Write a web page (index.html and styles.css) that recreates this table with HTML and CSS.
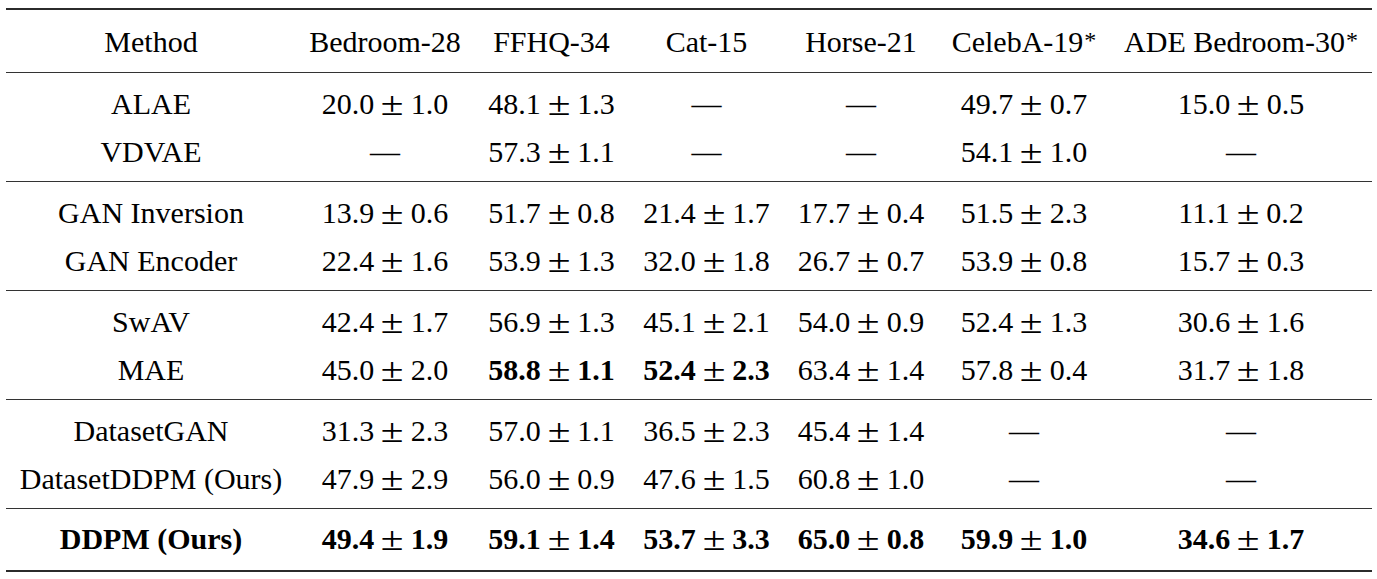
FILE: index.html
```html
<!DOCTYPE html>
<html>
<head>
<meta charset="utf-8">
<link rel="stylesheet" href="styles.css">
</head>
<body>
<table class="results">
  <colgroup>
    <col class="c-method"><col class="c-bed"><col class="c-ffhq"><col class="c-cat"><col class="c-horse"><col class="c-celeb"><col class="c-ade">
  </colgroup>
  <thead>
    <tr>
      <th>Method</th><th>Bedroom-28</th><th>FFHQ-34</th><th>Cat-15</th><th>Horse-21</th><th>CelebA-19<span class="ast">*</span></th><th>ADE Bedroom-30<span class="ast">*</span></th>
    </tr>
  </thead>
  <tbody class="grp">
    <tr><td>ALAE</td><td>20.0<span class="pm">±</span>1.0</td><td>48.1<span class="pm">±</span>1.3</td><td>—</td><td>—</td><td>49.7<span class="pm">±</span>0.7</td><td>15.0<span class="pm">±</span>0.5</td></tr>
    <tr><td>VDVAE</td><td>—</td><td>57.3<span class="pm">±</span>1.1</td><td>—</td><td>—</td><td>54.1<span class="pm">±</span>1.0</td><td>—</td></tr>
  </tbody>
  <tbody class="grp">
    <tr><td>GAN Inversion</td><td>13.9<span class="pm">±</span>0.6</td><td>51.7<span class="pm">±</span>0.8</td><td>21.4<span class="pm">±</span>1.7</td><td>17.7<span class="pm">±</span>0.4</td><td>51.5<span class="pm">±</span>2.3</td><td>11.1<span class="pm">±</span>0.2</td></tr>
    <tr><td>GAN Encoder</td><td>22.4<span class="pm">±</span>1.6</td><td>53.9<span class="pm">±</span>1.3</td><td>32.0<span class="pm">±</span>1.8</td><td>26.7<span class="pm">±</span>0.7</td><td>53.9<span class="pm">±</span>0.8</td><td>15.7<span class="pm">±</span>0.3</td></tr>
  </tbody>
  <tbody class="grp">
    <tr><td>SwAV</td><td>42.4<span class="pm">±</span>1.7</td><td>56.9<span class="pm">±</span>1.3</td><td>45.1<span class="pm">±</span>2.1</td><td>54.0<span class="pm">±</span>0.9</td><td>52.4<span class="pm">±</span>1.3</td><td>30.6<span class="pm">±</span>1.6</td></tr>
    <tr><td>MAE</td><td>45.0<span class="pm">±</span>2.0</td><td><b>58.8</b><span class="pm">±</span><b>1.1</b></td><td><b>52.4</b><span class="pm">±</span><b>2.3</b></td><td>63.4<span class="pm">±</span>1.4</td><td>57.8<span class="pm">±</span>0.4</td><td>31.7<span class="pm">±</span>1.8</td></tr>
  </tbody>
  <tbody class="grp">
    <tr><td>DatasetGAN</td><td>31.3<span class="pm">±</span>2.3</td><td>57.0<span class="pm">±</span>1.1</td><td>36.5<span class="pm">±</span>2.3</td><td>45.4<span class="pm">±</span>1.4</td><td>—</td><td>—</td></tr>
    <tr><td>DatasetDDPM (Ours)</td><td>47.9<span class="pm">±</span>2.9</td><td>56.0<span class="pm">±</span>0.9</td><td>47.6<span class="pm">±</span>1.5</td><td>60.8<span class="pm">±</span>1.0</td><td>—</td><td>—</td></tr>
  </tbody>
  <tbody class="final">
    <tr><td><b>DDPM (Ours)</b></td><td><b>49.4</b><span class="pm">±</span><b>1.9</b></td><td><b>59.1</b><span class="pm">±</span><b>1.4</b></td><td><b>53.7</b><span class="pm">±</span><b>3.3</b></td><td><b>65.0</b><span class="pm">±</span><b>0.8</b></td><td><b>59.9</b><span class="pm">±</span><b>1.0</b></td><td><b>34.6</b><span class="pm">±</span><b>1.7</b></td></tr>
  </tbody>
</table>
</body>
</html>
```

FILE: styles.css
```css
html, body {
  margin: 0;
  padding: 0;
  background: #ffffff;
}

body {
  font-family: "Liberation Serif", "Times New Roman", serif;
  color: #000;
}

.results {
  margin: 8px 0 0 6px;
  width: 1366px;
  table-layout: fixed;
  border-collapse: separate;
  border-spacing: 0;
  font-size: 30px;
  line-height: 48px;
}

.c-method { width: 290px; }
.c-bed { width: 178px; }
.c-ffhq { width: 155px; }
.c-cat { width: 155px; }
.c-horse { width: 154px; }
.c-celeb { width: 172px; }
.c-ade { width: 262px; }

.results th,
.results td {
  padding: 0;
  text-align: center;
  white-space: nowrap;
  font-weight: normal;
  vertical-align: baseline;
}

.results b {
  font-weight: bold;
}

.results thead th {
  border-top: 2px solid #2b2b2b;
  border-bottom: 1px solid #333;
  padding-top: 8px;
  padding-bottom: 6px;
}

.grp tr:first-child td {
  padding-top: 7px;
}

.grp tr:last-child td {
  padding-bottom: 5px;
  border-bottom: 1px solid #333;
}

.final td {
  padding-top: 6px;
  padding-bottom: 7px;
  border-bottom: 2px solid #2b2b2b;
}

.pm {
  display: inline-block;
  margin: 0 10px;
  font-weight: normal;
  transform: scale(1.38, 1.12);
}

.ast {
  font-size: 24px;
  line-height: 0;
  vertical-align: 4px;
  margin-left: 1px;
}
```
